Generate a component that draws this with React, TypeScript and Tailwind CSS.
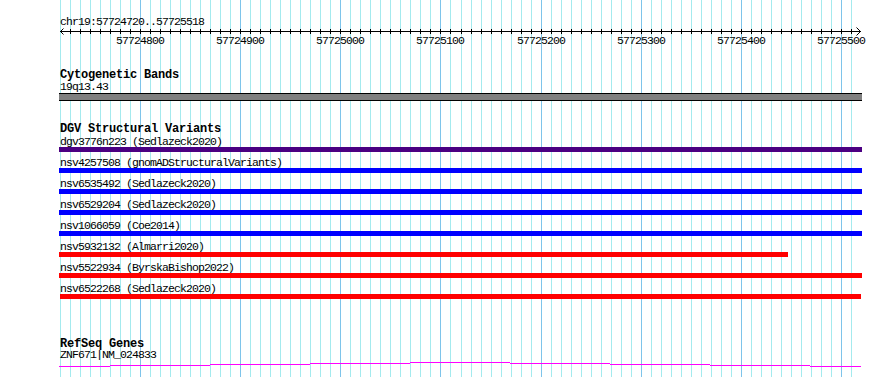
const START = 57724720;

// base pairs -> screen x (800 px for 798 bp, panel starts at x=60)
const toX = (bp: number) => Math.floor(60 + (bp - START) * 1.0025);

const gridLines = Array.from({ length: 80 }, (_, k) => ({
  x: toX(START + k * 10) + 0.5,
  major: (START + k * 10) % 100 === 0,
}));

const rulerLabels = [57724800, 57724900, 57725000, 57725100, 57725200, 57725300, 57725400, 57725500];

const variants = [
  { label: 'dgv3776n223 (Sedlazeck2020)', bar: 'ml-[59px] w-[803px] bg-[#4b0082]' },
  { label: 'nsv4257508 (gnomADStructuralVariants)', bar: 'ml-[59px] w-[803px] bg-[#0000ff]' },
  { label: 'nsv6535492 (Sedlazeck2020)', bar: 'ml-[59px] w-[803px] bg-[#0000ff]' },
  { label: 'nsv6529204 (Sedlazeck2020)', bar: 'ml-[59px] w-[803px] bg-[#0000ff]' },
  { label: 'nsv1066059 (Coe2014)', bar: 'ml-[59px] w-[803px] bg-[#0000ff]' },
  { label: 'nsv5932132 (Almarri2020)', bar: 'ml-[59px] w-[729px] bg-[#ff0000]' },
  { label: 'nsv5522934 (ByrskaBishop2022)', bar: 'ml-[59px] w-[803px] bg-[#ff0000]' },
  { label: 'nsv6522268 (Sedlazeck2020)', bar: 'ml-[60px] w-[801px] bg-[#ff0000]' },
];

// intron line of the gene, drawn as stepped 1px segments
const geneSegments = [
  { x1: 59, x2: 110, y: 5 },
  { x1: 110, x2: 210, y: 4 },
  { x1: 210, x2: 310, y: 3 },
  { x1: 310, x2: 410, y: 2 },
  { x1: 410, x2: 510, y: 1 },
  { x1: 510, x2: 610, y: 2 },
  { x1: 610, x2: 710, y: 3 },
  { x1: 710, x2: 810, y: 4 },
  { x1: 810, x2: 861, y: 5 },
];

function Ruler() {
  return (
    <svg width={890} height={18} className="block overflow-visible">
      <line x1={60} y1={3.5} x2={861} y2={3.5} stroke="#000" />
      <polyline points="63.5,0.5 60.5,3.5 63.5,6.5" fill="none" stroke="#000" />
      <polyline points="856.5,-0.5 860.5,3.5 856.5,7.5" fill="none" stroke="#000" />
      {gridLines.slice(1).map((g) => (
        <line key={g.x} x1={g.x} y1={1} x2={g.x} y2={6} stroke="#000" />
      ))}
      {rulerLabels.map((bp) => (
        <text
          key={bp}
          x={toX(bp)}
          y={16}
          textAnchor="middle"
          fontFamily="'Liberation Mono', monospace"
          fontSize={11.5}
          letterSpacing={-0.9}
          fill="#000"
        >
          {bp}
        </text>
      ))}
    </svg>
  );
}

function TrackTitle({ title, className }: { title: string; className: string }) {
  return (
    <div className={`pl-[60px] pt-[1px] text-[12px] font-bold tracking-[-0.2px] leading-[12px] ${className}`}>
      {title}
    </div>
  );
}

export default function App() {
  return (
    <div className="relative w-[890px] h-[377px] overflow-hidden bg-white text-black font-['Liberation_Mono',monospace]">
      {/* background grid */}
      <svg width={890} height={377} className="absolute inset-0">
        {gridLines.map((g) => (
          <line
            key={g.x}
            x1={g.x}
            y1={0}
            x2={g.x}
            y2={377}
            stroke={g.major ? '#7ec4ea' : '#a4eaee'}
          />
        ))}
      </svg>

      <div className="relative pt-[16px] text-[11.5px] tracking-[-0.9px]">
        <div className="pl-[60px] h-[12px] leading-[12px]">chr19:57724720..57725518</div>
        <Ruler />

        {/* Cytogenetic Bands */}
        <TrackTitle title="Cytogenetic Bands" className="mt-[22px] h-[13px]" />
        <div className="pl-[60px] h-[12px] leading-[12px]">19q13.43</div>
        <div className="ml-[59px] w-[803px] h-[8px] border-y border-black bg-[#808080]" />

        {/* DGV Structural Variants */}
        <TrackTitle title="DGV Structural Variants" className="mt-[21px] h-[9px]" />
        {variants.map((v) => (
          <div key={v.label}>
            <div className="pl-[60px] h-[16px] pt-[4px] leading-[14px] whitespace-pre">{v.label}</div>
            <div className={`h-[5px] ${v.bar}`} />
          </div>
        ))}

        {/* RefSeq Genes */}
        <TrackTitle title="RefSeq Genes" className="mt-[38px] h-[13px]" />
        <div className="pl-[60px] h-[11px] leading-[10px]">ZNF671|NM_024833</div>
        <svg width={890} height={7} className="block">
          {geneSegments.map((s) => (
            <line key={s.x1} x1={s.x1} y1={s.y + 0.5} x2={s.x2} y2={s.y + 0.5} stroke="#ff00ff" />
          ))}
        </svg>
      </div>
    </div>
  );
}
